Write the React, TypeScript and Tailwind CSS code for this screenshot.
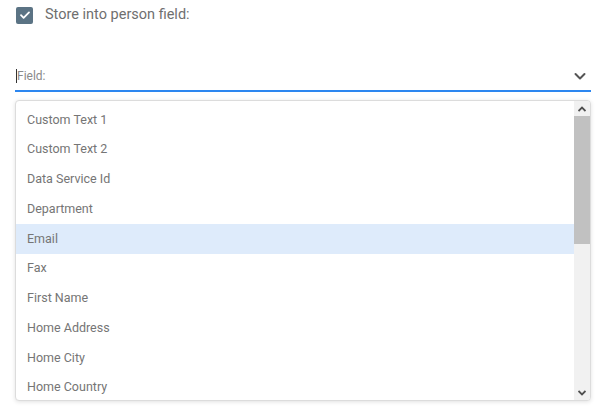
import React from 'react';

const fields = [
  'Custom Text 1',
  'Custom Text 2',
  'Data Service Id',
  'Department',
  'Email',
  'Fax',
  'First Name',
  'Home Address',
  'Home City',
  'Home Country',
];

export default function App() {
  return (
    <div className="w-[598px] h-[410px] bg-white overflow-hidden font-['Roboto',sans-serif] text-[#757575]">
      {/* checkbox row */}
      <div className="flex items-center gap-3 pl-4 pt-[6px] h-[24px]">
        <div className="w-[17px] h-[17px] rounded-[2px] bg-[#5b7384] flex items-center justify-center">
          <svg width="12" height="12" viewBox="0 0 12 12" fill="none">
            <path d="M2 6.2l2.6 2.6L10 3.4" stroke="white" strokeWidth="1.8" strokeLinecap="round" strokeLinejoin="round" />
          </svg>
        </div>
        <span className="text-[14.5px] text-[#6f6f6f] leading-none">Store into person field:</span>
      </div>

      {/* select field */}
      <div className="mt-[38px] ml-[15px] w-[576px] h-[30px] flex items-center border-b-2 border-[#2d87f0] pr-[4px]">
        <span className="w-px h-[14px] bg-[#333] ml-px" />
        <span className="text-[12px] text-[#8a8a8a] leading-none">Field:</span>
        <svg className="ml-auto" width="14" height="14" viewBox="0 0 14 14" fill="none">
          <path d="M2.5 5l4.5 4.5L11.5 5" stroke="#555" strokeWidth="2" strokeLinecap="round" strokeLinejoin="round" />
        </svg>
      </div>

      {/* dropdown */}
      <div className="mt-[8px] ml-[15px] w-[576px] h-[301px] rounded-[4px] border border-[#dcdcdc] shadow-[0_1px_4px_rgba(0,0,0,0.12)] bg-white flex overflow-hidden">
        <div className="flex-1 pt-[4px]">
          {fields.map((f) => (
            <div
              key={f}
              className={
                'h-[29.75px] flex items-center pl-[11px] text-[12.5px] ' +
                (f === 'Email' ? 'bg-[#deebfb]' : '')
              }
            >
              {f}
            </div>
          ))}
        </div>
        <div className="w-[16px] bg-[#f1f1f1] flex flex-col">
          <div className="h-[15px] flex items-center justify-center">
            <svg width="8" height="6" viewBox="0 0 8 6">
              <path d="M0.5 5L4 1.5L7.5 5" stroke="#505050" strokeWidth="1.8" fill="none" />
            </svg>
          </div>
          <div className="h-[128px] bg-[#c1c1c1]" />
          <div className="flex-1" />
          <div className="h-[15px] flex items-center justify-center">
            <svg width="8" height="6" viewBox="0 0 8 6">
              <path d="M0.5 1L4 4.5L7.5 1" stroke="#505050" strokeWidth="1.8" fill="none" />
            </svg>
          </div>
        </div>
      </div>
    </div>
  );
}
